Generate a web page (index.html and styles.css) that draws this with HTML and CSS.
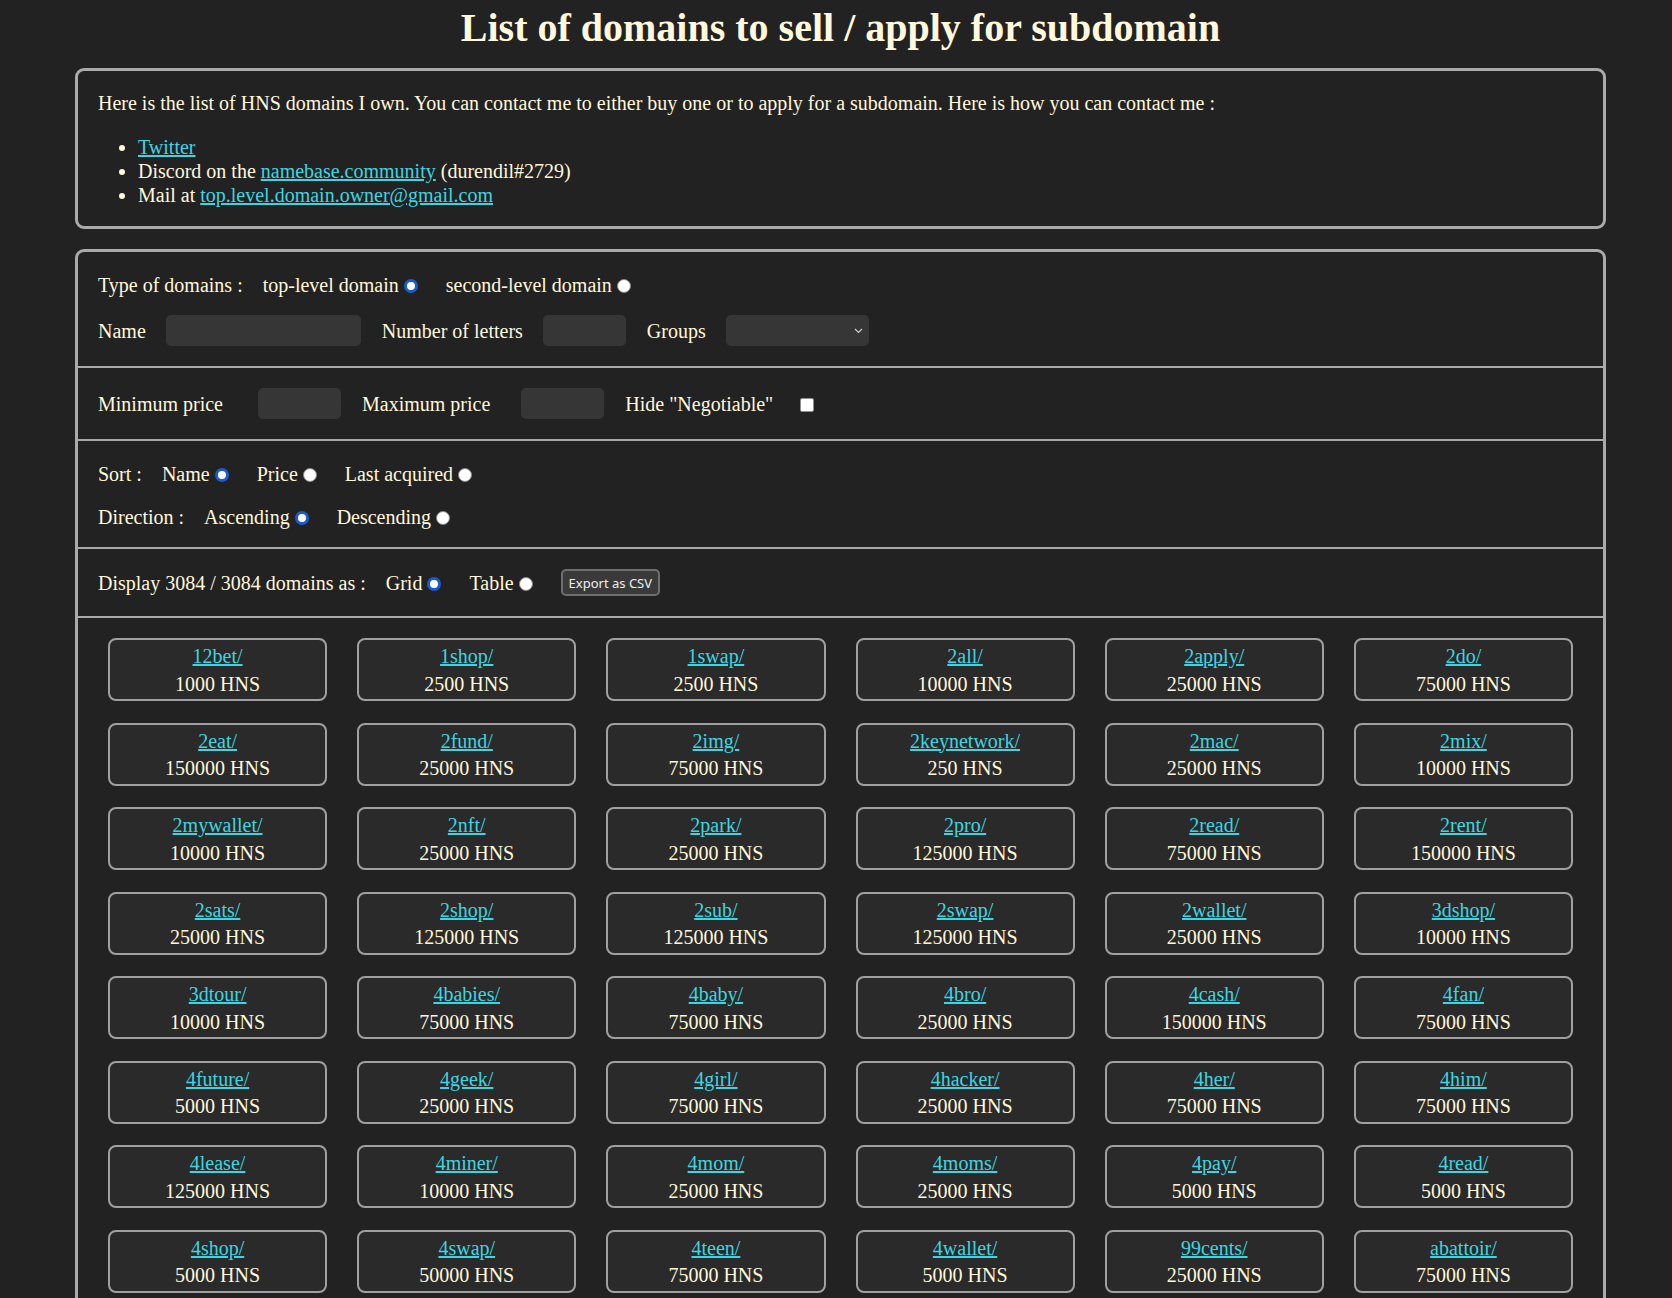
FILE: index.html
```html
<!DOCTYPE html>
<html lang="en">
<head>
<meta charset="utf-8">
<title>List of domains to sell / apply for subdomain</title>
<link rel="stylesheet" href="styles.css">
</head>
<body>
<div class="page">
  <h1 class="title">List of domains to sell / apply for subdomain</h1>

  <section class="panel intro">
    <p class="intro-text">Here is the list of HNS domains I own. You can contact me to either buy one or to apply for a subdomain. Here is how you can contact me :</p>
    <ul class="contact-list">
      <li><a class="link" href="#">Twitter</a></li>
      <li>Discord on the <a class="link" href="#">namebase.community</a> (durendil#2729)</li>
      <li>Mail at <a class="link" href="#">top.level.domain.owner@gmail.com</a></li>
    </ul>
  </section>

  <section class="panel filters">
    <div class="section">
      <div class="row">
        <span class="heading">Type of domains :</span>
        <label class="opt">top-level domain<input class="radio" type="radio" name="type" checked></label>
        <label class="opt">second-level domain<input class="radio" type="radio" name="type"></label>
      </div>
      <div class="row row-fields">
        <span class="heading">Name</span>
        <input class="field field-name" type="text">
        <span class="heading">Number of letters</span>
        <input class="field field-small" type="text">
        <span class="heading">Groups</span>
        <span class="select-wrap">
          <select class="field field-select"><option></option></select>
          <svg class="chevron" width="9" height="6" viewBox="0 0 9 6"><path d="M1 1 L4.5 4.5 L8 1" fill="none" stroke="#cfcfcf" stroke-width="1.2"/></svg>
        </span>
      </div>
    </div>

    <div class="section">
      <div class="row">
        <span class="heading">Minimum price</span>
        <input class="field field-small min-input" type="text">
        <span class="heading max-label">Maximum price</span>
        <input class="field field-small max-input" type="text">
        <label class="heading hide-label">Hide "Negotiable"<input class="checkbox" type="checkbox"></label>
      </div>
    </div>

    <div class="section section-sort">
      <div class="row">
        <span class="heading">Sort :</span>
        <label class="opt">Name<input class="radio" type="radio" name="sort" checked></label>
        <label class="opt">Price<input class="radio" type="radio" name="sort"></label>
        <label class="opt">Last acquired<input class="radio" type="radio" name="sort"></label>
      </div>
      <div class="row">
        <span class="heading">Direction :</span>
        <label class="opt">Ascending<input class="radio" type="radio" name="dir" checked></label>
        <label class="opt">Descending<input class="radio" type="radio" name="dir"></label>
      </div>
    </div>

    <div class="section">
      <div class="row">
        <span class="heading">Display 3084 / 3084 domains as :</span>
        <label class="opt">Grid<input class="radio" type="radio" name="display" checked></label>
        <label class="opt">Table<input class="radio" type="radio" name="display"></label>
        <button class="export-btn" type="button">Export as CSV</button>
      </div>
    </div>

    <div class="grid">
      <div class="card"><a class="link" href="#">12bet/</a><div>1000 HNS</div></div>
      <div class="card"><a class="link" href="#">1shop/</a><div>2500 HNS</div></div>
      <div class="card"><a class="link" href="#">1swap/</a><div>2500 HNS</div></div>
      <div class="card"><a class="link" href="#">2all/</a><div>10000 HNS</div></div>
      <div class="card"><a class="link" href="#">2apply/</a><div>25000 HNS</div></div>
      <div class="card"><a class="link" href="#">2do/</a><div>75000 HNS</div></div>

      <div class="card"><a class="link" href="#">2eat/</a><div>150000 HNS</div></div>
      <div class="card"><a class="link" href="#">2fund/</a><div>25000 HNS</div></div>
      <div class="card"><a class="link" href="#">2img/</a><div>75000 HNS</div></div>
      <div class="card"><a class="link" href="#">2keynetwork/</a><div>250 HNS</div></div>
      <div class="card"><a class="link" href="#">2mac/</a><div>25000 HNS</div></div>
      <div class="card"><a class="link" href="#">2mix/</a><div>10000 HNS</div></div>

      <div class="card"><a class="link" href="#">2mywallet/</a><div>10000 HNS</div></div>
      <div class="card"><a class="link" href="#">2nft/</a><div>25000 HNS</div></div>
      <div class="card"><a class="link" href="#">2park/</a><div>25000 HNS</div></div>
      <div class="card"><a class="link" href="#">2pro/</a><div>125000 HNS</div></div>
      <div class="card"><a class="link" href="#">2read/</a><div>75000 HNS</div></div>
      <div class="card"><a class="link" href="#">2rent/</a><div>150000 HNS</div></div>

      <div class="card"><a class="link" href="#">2sats/</a><div>25000 HNS</div></div>
      <div class="card"><a class="link" href="#">2shop/</a><div>125000 HNS</div></div>
      <div class="card"><a class="link" href="#">2sub/</a><div>125000 HNS</div></div>
      <div class="card"><a class="link" href="#">2swap/</a><div>125000 HNS</div></div>
      <div class="card"><a class="link" href="#">2wallet/</a><div>25000 HNS</div></div>
      <div class="card"><a class="link" href="#">3dshop/</a><div>10000 HNS</div></div>

      <div class="card"><a class="link" href="#">3dtour/</a><div>10000 HNS</div></div>
      <div class="card"><a class="link" href="#">4babies/</a><div>75000 HNS</div></div>
      <div class="card"><a class="link" href="#">4baby/</a><div>75000 HNS</div></div>
      <div class="card"><a class="link" href="#">4bro/</a><div>25000 HNS</div></div>
      <div class="card"><a class="link" href="#">4cash/</a><div>150000 HNS</div></div>
      <div class="card"><a class="link" href="#">4fan/</a><div>75000 HNS</div></div>

      <div class="card"><a class="link" href="#">4future/</a><div>5000 HNS</div></div>
      <div class="card"><a class="link" href="#">4geek/</a><div>25000 HNS</div></div>
      <div class="card"><a class="link" href="#">4girl/</a><div>75000 HNS</div></div>
      <div class="card"><a class="link" href="#">4hacker/</a><div>25000 HNS</div></div>
      <div class="card"><a class="link" href="#">4her/</a><div>75000 HNS</div></div>
      <div class="card"><a class="link" href="#">4him/</a><div>75000 HNS</div></div>

      <div class="card"><a class="link" href="#">4lease/</a><div>125000 HNS</div></div>
      <div class="card"><a class="link" href="#">4miner/</a><div>10000 HNS</div></div>
      <div class="card"><a class="link" href="#">4mom/</a><div>25000 HNS</div></div>
      <div class="card"><a class="link" href="#">4moms/</a><div>25000 HNS</div></div>
      <div class="card"><a class="link" href="#">4pay/</a><div>5000 HNS</div></div>
      <div class="card"><a class="link" href="#">4read/</a><div>5000 HNS</div></div>

      <div class="card"><a class="link" href="#">4shop/</a><div>5000 HNS</div></div>
      <div class="card"><a class="link" href="#">4swap/</a><div>50000 HNS</div></div>
      <div class="card"><a class="link" href="#">4teen/</a><div>75000 HNS</div></div>
      <div class="card"><a class="link" href="#">4wallet/</a><div>5000 HNS</div></div>
      <div class="card"><a class="link" href="#">99cents/</a><div>25000 HNS</div></div>
      <div class="card"><a class="link" href="#">abattoir/</a><div>75000 HNS</div></div>
    </div>
  </section>
</div>
</body>
</html>
```

FILE: styles.css
```css
html {
  scrollbar-width: none;
}

body {
  margin: 0;
  background: #222222;
  color: #fff8dc;
  font-family: "Liberation Serif", "Times New Roman", serif;
  font-size: 20px;
  line-height: 24px;
}

.page {
  width: 1531px;
  margin-left: 75px;
}

.title {
  margin: 5px 0 17px;
  font-size: 40px;
  line-height: 46px;
  font-weight: bold;
  text-align: center;
}

.panel {
  border: 3px solid #aaaaaa;
  border-radius: 9px;
}

.intro {
  padding: 0 20px;
  margin-bottom: 20px;
}

.intro-text {
  margin: 20px 0;
}

.contact-list {
  margin: 20px 0 19px;
  padding-left: 40px;
}

.link {
  color: #3cd6e2;
}

.section {
  display: flex;
  flex-direction: column;
  gap: 17px;
  padding: 20px;
  border-bottom: 2px solid #aaaaaa;
}

.section-sort {
  padding-bottom: 17px;
}

.row {
  display: flex;
  align-items: center;
  min-height: 26px;
}

.row-fields {
  gap: 20.5px;
}

.heading {
  white-space: nowrap;
}

.opt {
  display: inline-flex;
  align-items: center;
  margin-left: 20px;
  white-space: nowrap;
}

.opt + .opt {
  margin-left: 25px;
}

.radio {
  appearance: none;
  width: 14px;
  height: 14px;
  margin: 2px 3px 0 5px;
  border-radius: 50%;
  background: #ffffff;
  border: 1.5px solid #858585;
  box-sizing: border-box;
}

.radio:checked {
  border: 3.5px solid #1a5ccf;
}

.checkbox {
  appearance: none;
  width: 14px;
  height: 14px;
  margin: 2px 3px 0 27px;
  box-sizing: border-box;
  border: 1px solid #8f8f8f;
  border-radius: 2px;
  background: #ffffff;
}

.hide-label {
  display: inline-flex;
  align-items: center;
  margin-left: 21px;
}

.field {
  height: 31px;
  border: 0;
  border-radius: 5px;
  background: #363636;
  padding: 0;
  box-sizing: border-box;
  color: #fff8dc;
}

.field-name {
  width: 195px;
}

.field-small {
  width: 83px;
}

.min-input {
  margin-left: 35px;
}

.max-label {
  margin-left: 21px;
}

.max-input {
  margin-left: 31px;
}

.select-wrap {
  position: relative;
  display: inline-block;
  height: 31px;
}

.field-select {
  appearance: none;
  width: 143px;
  display: block;
}

.chevron {
  position: absolute;
  right: 6px;
  top: 13px;
}

.export-btn {
  margin-left: 25px;
  height: 27px;
  padding: 0 6px;
  border: 2px solid #6e6e6e;
  border-radius: 5px;
  background: #3a3a3a;
  color: #eeeeee;
  font-family: "Noto Sans", "Open Sans", sans-serif;
  font-size: 13px;
}

.grid {
  display: grid;
  grid-template-columns: repeat(6, 1fr);
  column-gap: 30px;
  row-gap: 21.5px;
  padding: 20px 30px;
}

.card {
  border: 2px solid #a0a0a0;
  border-radius: 8px;
  background: #2a2a2a;
  padding: 3px 0 1px;
  text-align: center;
  line-height: 27.5px;
}

.card .link {
  display: inline-block;
}
```
